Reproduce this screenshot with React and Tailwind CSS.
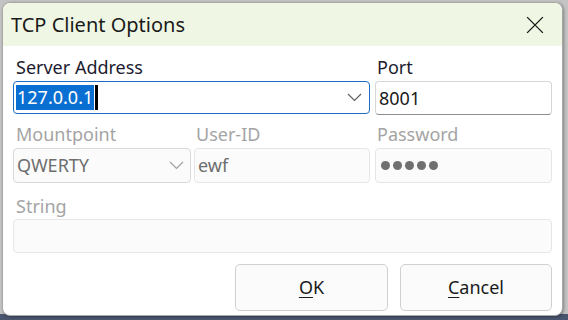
import React from "react";

const F = { fontFamily: '"Noto Sans", "Open Sans", sans-serif' };

function Chevron({ color = "#606060" }) {
  return (
    <svg width="15" height="9" viewBox="0 0 15 9" fill="none">
      <path d="M1 1 L7.5 7.5 L14 1" stroke={color} strokeWidth="1.2" />
    </svg>
  );
}

export default function App() {
  return (
    <div className="w-[568px] h-[320px] bg-[#c4c4c4] overflow-hidden relative" style={F}>
      <div className="absolute left-0 right-0 bottom-0 h-[6px] bg-[#4a5570]" />
      <div className="absolute left-[2px] top-[2px] w-[561px] h-[314px] bg-white rounded-[8px] border border-[#a8a8a8] overflow-hidden flex flex-col shadow-[1px_1px_3px_rgba(0,0,0,0.35)]">
        <div className="h-[43px] shrink-0 bg-[#eff7e4] flex items-center justify-between pl-[8px] pr-[18px]">
          <span className="text-[20px] text-[#1a1a1a] leading-none">TCP Client Options</span>
          <svg width="18" height="18" viewBox="0 0 16 16" fill="none">
            <path d="M1 1 L15 15 M15 1 L1 15" stroke="#1a1a1a" strokeWidth="1.2" />
          </svg>
        </div>
        <div className="flex flex-col px-[10px] pt-[11px]">
          {/* row 1 labels */}
          <div className="flex h-[20px] items-center text-[18px] text-[#1c1c30]">
            <span className="w-[362px] pl-[3px]">Server Address</span>
            <span className="pl-[2px]">Port</span>
          </div>
          <div className="flex mt-[4px] h-[34px]">
            <div className="w-[357px] h-[33px] border border-[#1a6fc4] rounded-[4px] flex items-center pl-[2px] pr-[7px] justify-between">
              <div className="flex items-center">
                <span className="bg-[#0a6fd2] text-white text-[18px] leading-[25px] px-[1px]">127.0.0.1</span>
                <span className="w-[3px] h-[25px] bg-black ml-[1px]" />
              </div>
              <Chevron />
            </div>
            <div className="w-[177px] ml-[5px] h-[34px] border border-[#d6d6d6] border-b-[#8d8d8d] rounded-[4px] flex items-center pl-[3px] text-[18px] text-[#1a1a1a]">
              8001
            </div>
          </div>
          {/* row 2 */}
          <div className="flex h-[20px] mt-[9px] items-center text-[18px] text-[#a4a4a4]">
            <span className="w-[181px] pl-[3px]">Mountpoint</span>
            <span className="w-[181px] pl-[2px]">User-ID</span>
            <span className="pl-[2px]">Password</span>
          </div>
          <div className="flex mt-[4px] h-[35px] text-[18px] text-[#6e6e6e]">
            <div className="w-[178px] border border-[#d9d9d9] rounded-[4px] bg-[#fbfbfb] flex items-center justify-between pl-[3px] pr-[6px]">
              <span>QWERTY</span>
              <Chevron color="#a0a0a0" />
            </div>
            <div className="w-[176px] ml-[3px] border border-[#e6e6e6] rounded-[4px] bg-[#fbfbfb] flex items-center pl-[3px]">
              ewf
            </div>
            <div className="w-[177px] ml-[5px] border border-[#e6e6e6] rounded-[4px] bg-[#fbfbfb] flex items-center pl-[5px] gap-[3px]">
              {[0, 1, 2, 3, 4].map((i) => (
                <span key={i} className="w-[9px] h-[9px] rounded-full bg-[#707070]" />
              ))}
            </div>
          </div>
          {/* row 3 */}
          <div className="flex h-[20px] mt-[13px] items-center text-[18px] text-[#a4a4a4]">
            <span className="pl-[3px]">String</span>
          </div>
          <div className="mt-[3px] h-[34px] w-[539px] border border-[#e6e6e6] rounded-[4px] bg-[#fbfbfb]" />
          {/* buttons */}
          <div className="flex justify-end mt-[11px] gap-[12px]">
            <div className="w-[153px] h-[47px] border border-[#d0d0d0] rounded-[5px] bg-[#fbfbfb] flex items-center justify-center text-[18px] text-[#1a1a1a]">
              <span><span className="underline underline-offset-[3px]">O</span>K</span>
            </div>
            <div className="w-[152px] h-[47px] border border-[#d0d0d0] rounded-[5px] bg-[#fbfbfb] flex items-center justify-center text-[18px] text-[#1a1a1a]">
              <span><span className="underline underline-offset-[3px]">C</span>ancel</span>
            </div>
          </div>
        </div>
      </div>
    </div>
  );
}
